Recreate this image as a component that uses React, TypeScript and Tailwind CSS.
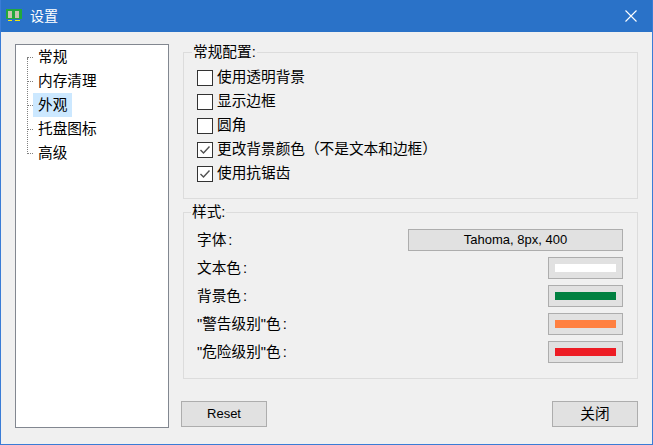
const treeItems = ['常规', '内存清理', '外观', '托盘图标', '高级'];

const checks = [
  { label: '使用透明背景', checked: false },
  { label: '显示边框', checked: false },
  { label: '圆角', checked: false },
  { label: '更改背景颜色\uFF08不是文本和边框\uFF09', checked: true },
  { label: '使用抗锯齿', checked: true },
];

const colors = [
  { label: '文本色', swatch: 'bg-white' },
  { label: '背景色', swatch: 'bg-[#008040]' },
  { label: '"警告级别"色', swatch: 'bg-[#ff8040]' },
  { label: '"危险级别"色', swatch: 'bg-[#ed1c24]' },
];

const AppIcon = () => (
  <svg width="16" height="12" viewBox="0 0 16 12" className="shrink-0 mb-[2px]">
    <rect x="0" y="0" width="16" height="10" fill="#22a83c" />
    <rect x="2" y="2" width="4" height="7" fill="#c9c4b0" />
    <rect x="9" y="2" width="4" height="7" fill="#c9c4b0" />
    <rect x="2" y="11" width="4" height="1" fill="#f5e60a" />
    <rect x="9" y="11" width="5" height="1" fill="#f5e60a" />
  </svg>
);

const CloseIcon = () => (
  <svg width="12" height="12" viewBox="0 0 12 12" className="shrink-0">
    <path d="M0.5 0.5L11.5 11.5M11.5 0.5L0.5 11.5" stroke="#fff" strokeWidth="1.1" fill="none" />
  </svg>
);

const CheckMark = () => (
  <svg width="14" height="14" viewBox="0 0 14 14">
    <path d="M2.5 7L5.5 10L11.5 3.5" stroke="#505050" strokeWidth="1.4" fill="none" />
  </svg>
);

const Label = ({ text }: { text: string }) => (
  <span className="-ml-px">
    {text}
    <span className="ml-[2px]">:</span>
  </span>
);

export default function App() {
  return (
    <div className="w-[653px] h-[445px] flex flex-col bg-[#f0f0f0] border-x border-b border-[#3a7cd6] overflow-hidden text-[14.67px] leading-[20px] text-black font-['Liberation_Sans','Noto_Sans_CJK_SC',sans-serif]">
      {/* Title bar */}
      <div className="h-8 shrink-0 -mx-px flex items-center bg-[#2a72c8] text-white pl-[6px] pr-[16px]">
        <AppIcon />
        <span className="ml-2 flex-1 text-[14px]">设置</span>
        <CloseIcon />
      </div>

      <div className="flex-1 flex pl-[14px]">
        {/* Tree */}
        <div className="relative w-[154px] h-[384px] mt-3 bg-white border border-[#828790]">
          <div className="absolute left-[11px] top-[13px] h-[96px] border-l border-dotted border-[#808080]" />
          {treeItems.map((item) => (
            <div key={item} className="flex items-center h-6 pl-[11px]">
              <span className="w-[6px] border-t border-dotted border-[#808080]" />
              <span className={`h-6 px-[5px] flex items-center ${item === '外观' ? 'bg-[#cce8ff]' : ''}`}>{item}</span>
            </div>
          ))}
        </div>

        {/* Right column */}
        <div className="w-[457px] ml-3 mt-[10px] flex flex-col">
          <fieldset className="ml-[2px] h-[157px] border border-[#dcdcdc] pl-[13px]">
            <legend className="-ml-[5px] px-px">常规配置:</legend>
            <div className="pt-[3px] flex flex-col">
              {checks.map((c) => (
                <label key={c.label} className="h-6 flex items-center gap-1">
                  <span className="w-4 h-4 mt-px flex items-center justify-center bg-white border border-[#333333]">
                    {c.checked && <CheckMark />}
                  </span>
                  {c.label}
                </label>
              ))}
            </div>
          </fieldset>

          <fieldset className="ml-[2px] mt-[3px] h-[177px] border border-[#dcdcdc] px-[14px]">
            <legend className="-ml-[7px] px-px">样式:</legend>
            <div className="pt-[7px] flex flex-col gap-[6px]">
              <div className="h-[22px] flex items-center justify-between">
                <Label text="字体" />
                <button className="w-[215px] h-[22px] bg-[#e1e1e1] border border-[#adadad] text-[13px]">Tahoma, 8px, 400</button>
              </div>
              {colors.map((c) => (
                <div key={c.label} className="h-[22px] flex items-center justify-between">
                  <Label text={c.label} />
                  <button className="w-[75px] h-[22px] flex items-center justify-center bg-[#e1e1e1] border border-[#adadad]">
                    <span className={`w-[61px] h-2 ${c.swatch}`} />
                  </button>
                </div>
              ))}
            </div>
          </fieldset>

          <div className="mt-[22px] flex justify-between">
            <button className="w-[86px] h-[26px] bg-[#e1e1e1] border border-[#adadad] text-[13px]">Reset</button>
            <button className="w-[86px] h-[26px] bg-[#e1e1e1] border border-[#adadad]">关闭</button>
          </div>
        </div>
      </div>
    </div>
  );
}
